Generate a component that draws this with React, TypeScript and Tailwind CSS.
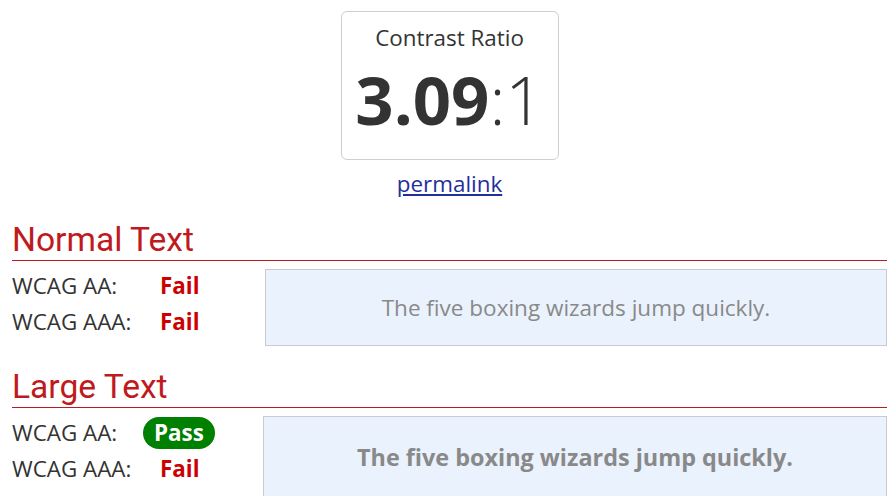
const body = { fontFamily: '"Open Sans", "Liberation Sans", sans-serif' };
const heading = { fontFamily: 'Roboto, "Liberation Sans", sans-serif' };

type Level = 'pass' | 'fail';

function Result({ level }: { level: Level }) {
  if (level === 'pass') {
    return (
      <span className="inline-flex h-[32px] items-center rounded-full bg-[#008000] px-[11px] font-bold text-white">
        Pass
      </span>
    );
  }
  return <span className="pl-[17px] font-bold text-[#cc0000]">Fail</span>;
}

function Section({
  title,
  aa,
  aaa,
  large,
}: {
  title: string;
  aa: Level;
  aaa: Level;
  large?: boolean;
}) {
  return (
    <section>
      <h2
        style={heading}
        className="h-[41px] border-b border-[#b81c22] text-[33.6px] leading-[40px] text-[#bf1a20]"
      >
        {title}
      </h2>
      <div className="flex items-start">
        <div className={`mt-[7px] shrink-0 ${large ? 'w-[251px]' : 'w-[253px]'}`}>
          <div className="flex h-[36px] items-center">
            <span className="w-[131px]">WCAG AA:</span>
            <Result level={aa} />
          </div>
          <div className="flex h-[36px] items-center">
            <span className="w-[131px]">WCAG AAA:</span>
            <Result level={aaa} />
          </div>
        </div>
        <div
          className={`mt-[8px] flex flex-1 items-center justify-center border border-[#c9cbcf] bg-[#eaf2fd] text-[#898989] ${
            large ? 'h-[84px] text-[23.4px] font-bold' : 'h-[77px] text-[22.5px]'
          }`}
        >
          The five boxing wizards jump quickly.
        </div>
      </div>
    </section>
  );
}

export default function App() {
  return (
    <div style={body} className="min-h-[496px] bg-white pb-4 pl-[12px] pr-[5px] pt-[11px] text-[22.4px] text-[#333333]">
      <div className="flex flex-col items-center">
        <div className="w-[218px] rounded-[6px] border border-[#cfcfcf] pb-[24px] pt-[11px] text-center">
          <div className="leading-[30px]">Contrast Ratio</div>
          <div className="mt-[10px] text-[67px] leading-[72px]">
            <span className="font-bold">3.09</span>
            <span className="font-light">:1</span>
          </div>
        </div>
        <a href="#" className="mt-[9px] leading-[30px] text-[#1f2f9c] underline">
          permalink
        </a>
      </div>

      <div className="mt-[21px]">
        <Section title="Normal Text" aa="fail" aaa="fail" />
      </div>
      <div className="mt-[21px]">
        <Section title="Large Text" aa="pass" aaa="fail" large />
      </div>
    </div>
  );
}
